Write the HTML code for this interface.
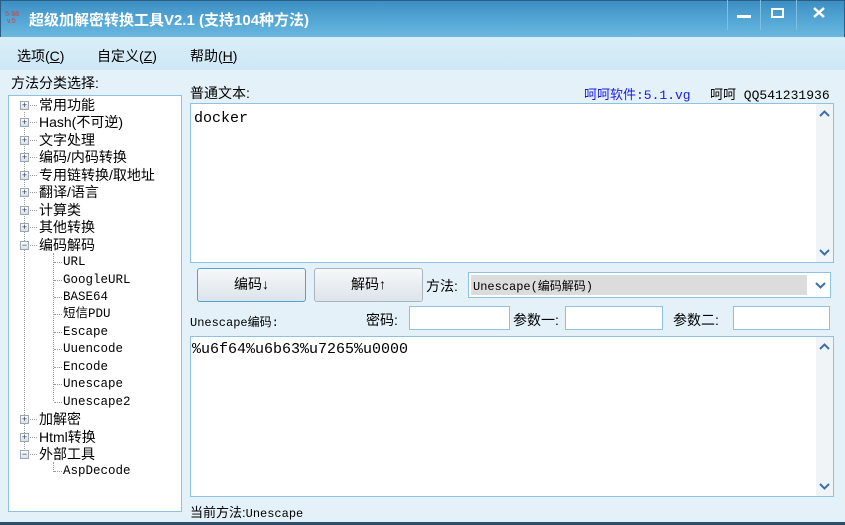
<!DOCTYPE html>
<html><head><meta charset="utf-8"><style>
*{margin:0;padding:0;box-sizing:border-box}
body{width:845px;height:525px;overflow:hidden;position:relative;background:#e4f1f9;font-family:"Liberation Sans","Noto Sans CJK SC",sans-serif;font-size:13px;color:#000}
.a{position:absolute;white-space:nowrap}
.mono{font-family:"Liberation Mono","Noto Sans CJK SC",monospace}
#title{left:0;top:0;width:845px;height:37px;background:linear-gradient(#3d8fc3,#56a9d6 60%,#6bb8de);border:1px solid #2a5e86;border-bottom:none}
#menu{left:0;top:37px;width:845px;height:33px;background:linear-gradient(#d9eef8,#cfe8f5)}
.box{position:absolute;background:#fff;border:1px solid #8ec1e2}
.sb{position:absolute;right:0;top:0;bottom:0;width:17px;background:#f0f4f7}
.btn{position:absolute;border:1px solid #a8b4bf;border-radius:3px;background:linear-gradient(#f6f8fa,#dde4ea);text-align:center;line-height:31px;font-size:14px}
.ti{position:absolute;font-size:13px;line-height:17px;white-space:nowrap}
.pm{position:absolute;width:9px;height:9px;border:1px solid #9aa;background:linear-gradient(#fff,#dde);font-size:9px;line-height:7px;text-align:center;color:#336}
.in{position:absolute;background:#fff;border:1px solid #8ec1e2}
</style></head><body>
<div id="title" class="a"></div>
<div class="a" style="left:5px;top:11px;font-size:7px;color:#c44;line-height:7px">5<span style="color:#36c">·</span>98<br>&nbsp;v.5</div>
<div class="a" style="left:29px;top:9px;color:#fff;font-size:15px;font-weight:bold">超级加解密转换工具V2.1 (支持104种方法)</div>
<div class="a" style="left:727px;top:0;width:1px;height:30px;background:#7fbfe0"></div>
<div class="a" style="left:760px;top:0;width:1px;height:30px;background:#7fbfe0"></div>
<div class="a" style="left:796px;top:0;width:1px;height:30px;background:#7fbfe0"></div>
<div class="a" style="left:737px;top:15px;width:14px;height:3px;background:#fff"></div>
<div class="a" style="left:771px;top:8px;width:13px;height:10px;border:2px solid #fff"></div>
<svg class="a" style="left:813px;top:7px" width="12" height="11"><path d="M1 1L11 10M11 1L1 10" stroke="#fff" stroke-width="2.5"/></svg>
<div id="menu" class="a"></div>
<div class="a" style="left:17px;top:46px;font-size:14px">选项(<u>C</u>)</div>
<div class="a" style="left:97px;top:46px;font-size:14px">自定义(<u>Z</u>)</div>
<div class="a" style="left:190px;top:46px;font-size:14px">帮助(<u>H</u>)</div>
<div class="a" style="left:11px;top:73px;font-size:14px">方法分类选择:</div>
<div class="box" style="left:8px;top:95px;width:174px;height:417px"></div>
<div class="a" style="left:24px;top:112px;width:0;height:343px;border-left:1px dotted #999"></div>
<div class="a" style="left:53px;top:253px;width:0;height:148px;border-left:1px dotted #999"></div>
<div class="a" style="left:53px;top:462px;width:0;height:10px;border-left:1px dotted #999"></div>
<div id="tree"></div>
<div class="a" style="left:190px;top:83px;font-size:14px">普通文本:</div>
<div class="a mono" style="left:584px;top:84px;color:#1a1adf;font-size:13px">呵呵软件:5.1.vg</div>
<div class="a mono" style="left:710px;top:84px;font-size:13px">呵呵 QQ541231936</div>
<div class="box" style="left:190px;top:103px;width:644px;height:160px"><div class="sb"><svg class="a" style="left:3px;top:6px" width="11" height="7"><path d="M1 6L5.5 1.5L10 6" stroke="#3b6fa8" stroke-width="2" fill="none"/></svg><svg class="a" style="left:3px;bottom:6px" width="11" height="7"><path d="M1 1L5.5 5.5L10 1" stroke="#3b6fa8" stroke-width="2" fill="none"/></svg></div>
<div class="a mono" style="left:3px;top:6px;font-size:15px">docker</div></div>
<div class="btn" style="left:197px;top:268px;width:109px;height:34px;border-color:#4fa3d8">编码↓</div>
<div class="btn" style="left:314px;top:268px;width:109px;height:34px">解码↑</div>
<div class="a" style="left:426px;top:276px;font-size:14px">方法:</div>
<div class="in" style="left:468px;top:272px;width:363px;height:26px"><div class="a" style="left:2px;top:2px;width:336px;height:20px;background:#dcdcdc"></div><div class="a mono" style="left:4px;top:4px;font-size:12px">Unescape(编码解码)</div><svg class="a" style="right:4px;top:9px" width="11" height="7"><path d="M1 1L5.5 5.5L10 1" stroke="#3b6fa8" stroke-width="2" fill="none"/></svg></div>
<div class="a mono" style="left:190px;top:313px;font-size:12px">Unescape编码:</div>
<div class="a" style="left:366px;top:310px;font-size:14px">密码:</div>
<div class="in" style="left:409px;top:306px;width:101px;height:24px"></div>
<div class="a" style="left:513px;top:310px;font-size:14px">参数一:</div>
<div class="in" style="left:565px;top:306px;width:98px;height:24px"></div>
<div class="a" style="left:673px;top:310px;font-size:14px">参数二:</div>
<div class="in" style="left:733px;top:306px;width:97px;height:24px"></div>
<div class="box" style="left:190px;top:336px;width:644px;height:161px"><div class="sb"><svg class="a" style="left:3px;top:6px" width="11" height="7"><path d="M1 6L5.5 1.5L10 6" stroke="#3b6fa8" stroke-width="2" fill="none"/></svg><svg class="a" style="left:3px;bottom:6px" width="11" height="7"><path d="M1 1L5.5 5.5L10 1" stroke="#3b6fa8" stroke-width="2" fill="none"/></svg></div>
<div class="a mono" style="left:1px;top:4px;font-size:15px">%u6f64%u6b63%u7265%u0000</div></div>
<div class="a" style="left:190px;top:502px;font-size:13px">当前方法:<span class="mono" style="font-size:12px">Unescape</span></div>
<div class="a" style="left:0;top:522px;width:845px;height:3px;background:#2c4f6c"></div>
<script>
var items=[["常用功能",0,"+"],["Hash(不可逆)",0,"+"],["文字处理",0,"+"],["编码/内码转换",0,"+"],["专用链转换/取地址",0,"+"],["翻译/语言",0,"+"],["计算类",0,"+"],["其他转换",0,"+"],["编码解码",0,"−"],["URL",1],["GoogleURL",1],["BASE64",1],["短信PDU",1],["Escape",1],["Uuencode",1],["Encode",1],["Unescape",1],["Unescape2",1],["加解密",0,"+"],["Html转换",0,"+"],["外部工具",0,"−"],["AspDecode",1]];
var h="";items.forEach(function(it,i){var y=97+i*17.45;
if(it[1]){h+='<div class="a" style="left:54px;top:'+(y+8)+'px;width:8px;border-top:1px dotted #999"></div><div class="ti mono" style="left:63px;top:'+y+'px;font-size:12.5px">'+it[0]+'</div>';}
else{h+='<div class="pm" style="left:20px;top:'+(y+4)+'px">'+it[2]+'</div><div class="a" style="left:30px;top:'+(y+8)+'px;width:7px;border-top:1px dotted #999"></div><div class="ti" style="left:39px;top:'+y+'px;font-size:14px">'+it[0]+'</div>';}
});document.getElementById("tree").innerHTML=h;
</script>
</body></html>
